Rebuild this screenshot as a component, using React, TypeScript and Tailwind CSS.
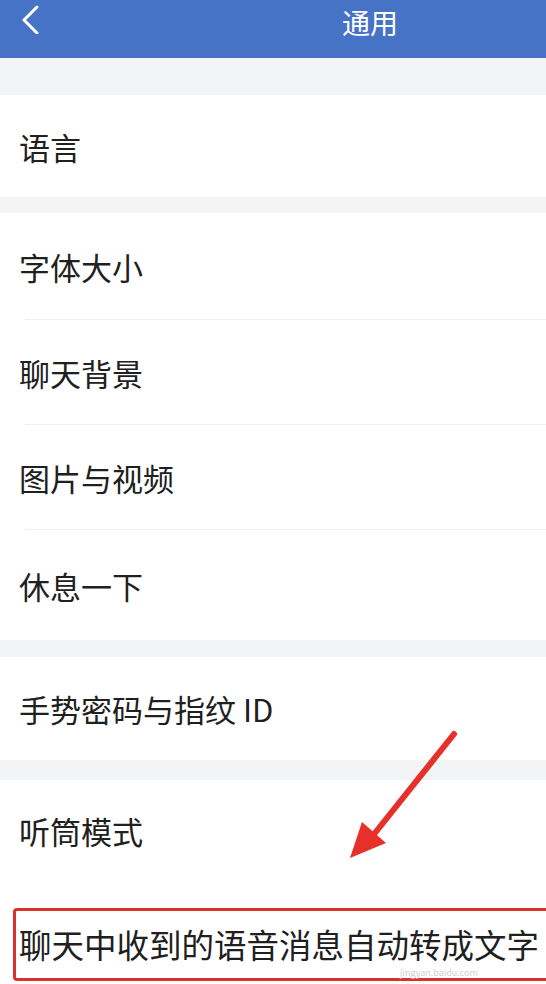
import React from "react";

const font = { fontFamily: '"Noto Sans CJK SC", "Noto Sans", sans-serif' };

function Row({ label, h, sep = false }: { label: string; h: string; sep?: boolean }) {
  return (
    <div className={`relative flex items-center bg-white pl-[19px] ${h}`}>
      <span className="text-[31px] leading-none text-[#202020]">{label}</span>
      {sep && <div className="absolute bottom-0 left-[25px] right-0 h-px bg-[#efeff1]" />}
    </div>
  );
}

export default function App() {
  return (
    <div className="relative w-[546px] h-[984px] overflow-hidden bg-[#f3f4f6]" style={font}>
      <div className="flex h-[58px] items-start bg-[#4673c6] pt-[2px]">
        <svg className="ml-[18px] mt-[2px] shrink-0" width="24" height="30" viewBox="0 0 24 30">
          <path d="M19 3 L6 16 L19 29" fill="none" stroke="#fff" strokeWidth="3" strokeLinecap="round" strokeLinejoin="round" />
        </svg>
        <div className="ml-[300px] whitespace-nowrap text-[28px] leading-[40px] text-white">通用</div>
      </div>
      <div className="h-[37px]" />
      <Row label="语言" h="h-[102px]" />
      <div className="h-[16px]" />
      <Row label="字体大小" h="h-[107px]" sep />
      <Row label="聊天背景" h="h-[105px]" sep />
      <Row label="图片与视频" h="h-[105px]" sep />
      <Row label="休息一下" h="h-[110px]" />
      <div className="h-[17px]" />
      <Row label="手势密码与指纹 ID" h="h-[103px]" />
      <div className="h-[20px]" />
      <Row label="听筒模式" h="h-[100px]" />
      <div className="relative h-[104px] bg-white pt-[28px]">
        <div className="ml-[13px] flex h-[73px] w-[560px] items-center rounded-[4px] border-[3px] border-[#d8322e] pl-[3px]">
          <span className="whitespace-nowrap text-[32.5px] leading-none text-[#202020]">聊天中收到的语音消息自动转成文字</span>
        </div>
        <div className="absolute left-[400px] top-[88px] text-[9px] leading-none text-[#d0d0d0]">jingyan.baidu.com</div>
      </div>
      <svg className="absolute left-0 top-0" width="546" height="984" viewBox="0 0 546 984">
        <path d="M454 734 L371 838" stroke="#e8302a" strokeWidth="6" strokeLinecap="round" />
        <path d="M350 858 L362 822 L386 843 Z" fill="#e8302a" />
      </svg>
    </div>
  );
}
